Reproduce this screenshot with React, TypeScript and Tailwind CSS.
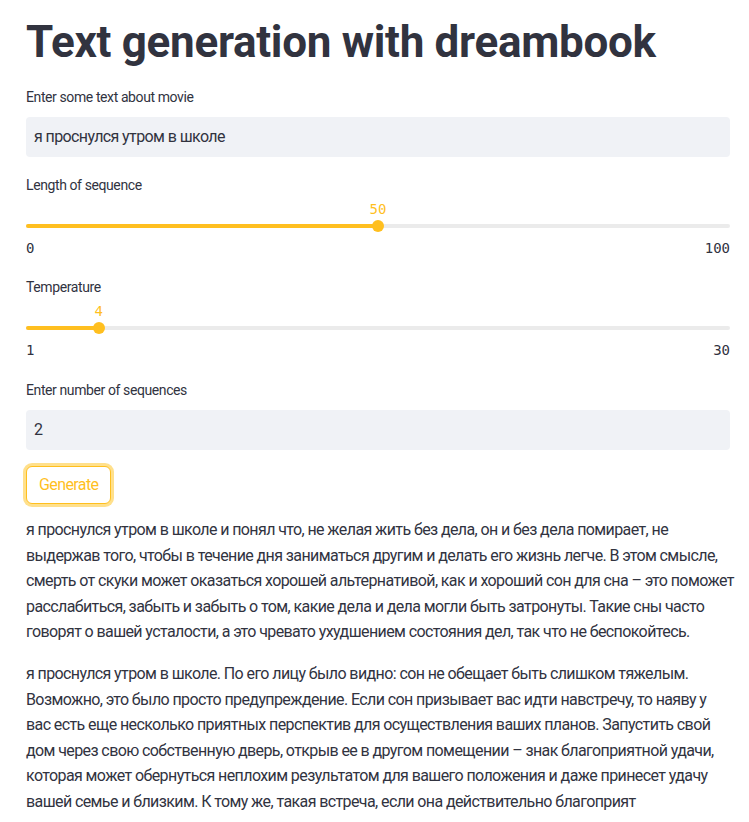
import React from "react";

const font = { fontFamily: "Roboto, 'Noto Sans', sans-serif" };

const para1 = [
  "я проснулся утром в школе и понял что, не желая жить без дела, он и без дела помирает, не",
  "выдержав того, чтобы в течение дня заниматься другим и делать его жизнь легче. В этом смысле,",
  "смерть от скуки может оказаться хорошей альтернативой, как и хороший сон для сна – это поможет",
  "расслабиться, забыть и забыть о том, какие дела и дела могли быть затронуты. Такие сны часто",
  "говорят о вашей усталости, а это чревато ухудшением состояния дел, так что не беспокойтесь.",
];

const para2 = [
  "я проснулся утром в школе. По его лицу было видно: сон не обещает быть слишком тяжелым.",
  "Возможно, это было просто предупреждение. Если сон призывает вас идти навстречу, то наяву у",
  "вас есть еще несколько приятных перспектив для осуществления ваших планов. Запустить свой",
  "дом через свою собственную дверь, открыв ее в другом помещении – знак благоприятной удачи,",
  "которая может обернуться неплохим результатом для вашего положения и даже принесет удачу",
  "вашей семье и близким. К тому же, такая встреча, если она действительно благоприят",
];

const Label = ({ text }: { text: string }) => (
  <div className="h-5 text-[14px] leading-5 tracking-[-0.4px] text-[#31333f]">{text}</div>
);

const TextBox = ({ value }: { value: string }) => (
  <div className="mt-[10px] flex h-10 items-center rounded bg-[#f0f2f6] px-2 text-[16px] tracking-[-0.6px] text-[#31333f]">
    {value}
  </div>
);

const Slider = ({ value, min, max }: { value: number; min: number; max: number }) => {
  const pct = ((value - min) / (max - min)) * 100;
  return (
    <div className="mt-[4px]">
      <div className="relative h-[33px]">
        <div className="absolute left-0 right-0 top-[25px] h-1 rounded-full bg-[#ebebeb]" />
        <div
          className="absolute left-0 top-[25px] h-1 rounded-full bg-[#ffbf1f]"
          style={{ width: pct + "%" }}
        />
        <div
          className="absolute top-[21px] h-3 w-3 -translate-x-1/2 rounded-full bg-[#ffbf1f]"
          style={{ left: pct + "%" }}
        />
        <div
          className="absolute top-0 -translate-x-1/2 font-['DejaVu_Sans_Mono',monospace] text-[14px] leading-5 text-[#ffbf1f]"
          style={{ left: pct + "%" }}
        >
          {value}
        </div>
      </div>
      <div className="mt-[6px] flex h-5 justify-between font-['DejaVu_Sans_Mono',monospace] text-[14px] leading-5 text-[#31333f]">
        <span>{min}</span>
        <span>{max}</span>
      </div>
    </div>
  );
};

export default function App() {
  return (
    <div className="min-h-screen bg-white pl-[26px] pr-[19px]" style={font}>
      <h1 className="pt-[16px] text-[44px] font-bold leading-[52px] tracking-[-0.3px] text-[#31333f]">
        Text generation with dreambook
      </h1>

      <div className="mt-[19px]">
        <Label text="Enter some text about movie" />
        <TextBox value="я проснулся утром в школе" />
      </div>

      <div className="mt-[18px]">
        <Label text="Length of sequence" />
        <Slider value={50} min={0} max={100} />
      </div>

      <div className="mt-[19px]">
        <Label text="Temperature" />
        <Slider value={4} min={1} max={30} />
      </div>

      <div className="mt-[20px]">
        <Label text="Enter number of sequences" />
        <TextBox value="2" />
      </div>

      <div className="mt-[16px]">
        <button className="h-[38px] rounded-[6px] border border-[#ffbf1f] bg-white px-3 text-[16px] tracking-[-0.6px] text-[#ffbf1f] ring-[3px] ring-[#ffe08c]">
          Generate
        </button>
      </div>

      <div className="mt-[13px] text-[16px] leading-[25.6px] tracking-[-0.6px] text-[#31333f]">
        <p className="mb-4 whitespace-nowrap">
          {para1.map((l, i) => (
            <span key={i} className="block">
              {l}
            </span>
          ))}
        </p>
        <p className="whitespace-nowrap">
          {para2.map((l, i) => (
            <span key={i} className="block">
              {l}
            </span>
          ))}
        </p>
      </div>
    </div>
  );
}
